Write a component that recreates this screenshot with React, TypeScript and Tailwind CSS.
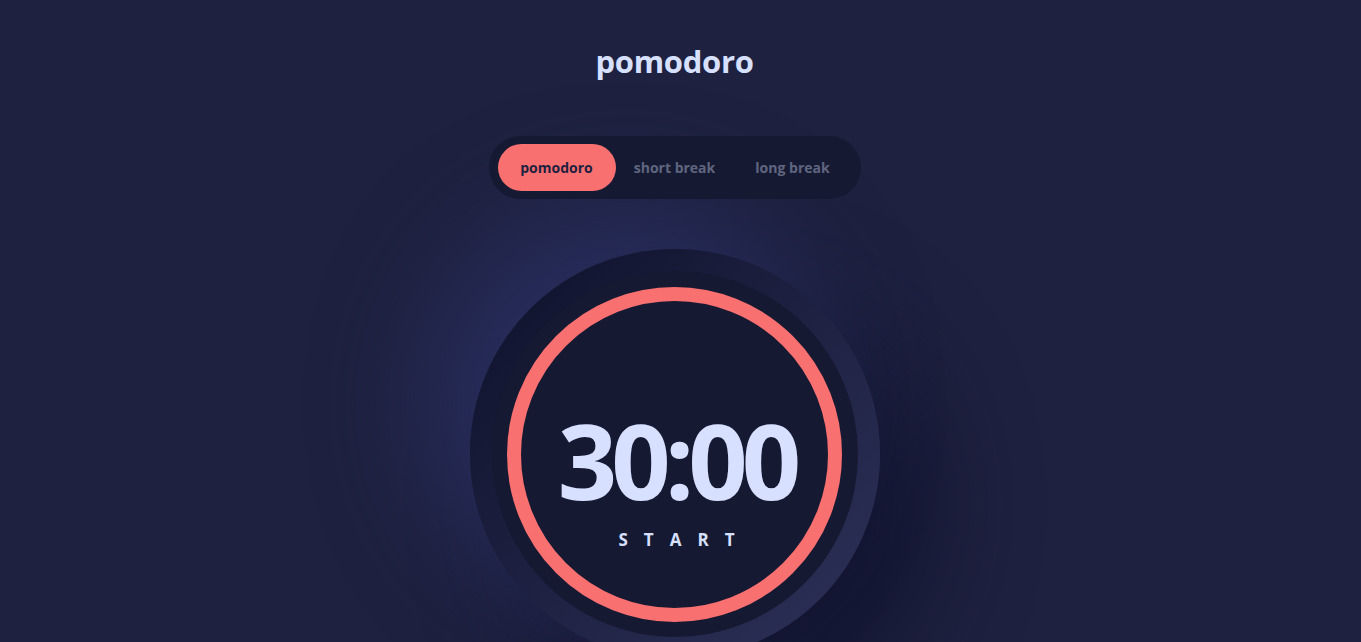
import React from "react";
import { Settings } from "lucide-react";

export default function App() {
  const R = 160.5;
  return (
    <div className="h-screen w-full overflow-y-scroll bg-[#1E213F]">
      <div
        className="min-h-[986px] w-full flex flex-col items-center pr-[12px] pt-[41px]"
        style={{ fontFamily: '"Open Sans", "Liberation Sans", sans-serif' }}
      >
        <h1 className="text-[31px] leading-[40px] font-bold text-[#D7E0FF] tracking-[-0.3px]">
          pomodoro
        </h1>

        <div className="relative z-10 mt-[55px] flex items-center rounded-full bg-[#161932] px-[9px] py-[8px]">
          <button className="h-[47px] w-[118px] rounded-full bg-[#F87070] text-[14px] font-bold text-[#1E213F]">
            pomodoro
          </button>
          <button className="h-[47px] w-[118px] rounded-full text-[14px] font-bold text-[#D7E0FF]/40">
            short break
          </button>
          <button className="h-[47px] w-[118px] rounded-full text-[14px] font-bold text-[#D7E0FF]/40">
            long break
          </button>
        </div>

        <div className="mt-[50px] flex h-[410px] w-[410px] items-center justify-center rounded-full bg-[linear-gradient(315deg,#2E325A_0%,#0E112A_100%)] shadow-[-50px_-50px_100px_#272C5A,50px_50px_100px_#121530]">
          <div className="relative flex h-[366px] w-[366px] items-center justify-center rounded-full bg-[#161932]">
            <svg className="absolute left-[15.5px] top-[15.5px]" width="335" height="335" viewBox="0 0 335 335">
              <circle cx="167.5" cy="167.5" r={R} fill="none" stroke="#F87070" strokeWidth="14" />
            </svg>
            <div className="relative mt-[48px] flex flex-col items-center">
              <div className="text-[104px] leading-none font-bold tracking-[-6px] text-[#D7E0FF] pl-[4px]">
                30:00
              </div>
              <div className="mt-[19px] pl-[20px] text-[17px] leading-none font-bold tracking-[16px] text-[#D7E0FF]">
                START
              </div>
            </div>
          </div>
        </div>

        <button className="mt-[63px] text-[#D7E0FF]/50">
          <Settings size={28} />
        </button>
      </div>
    </div>
  );
}
